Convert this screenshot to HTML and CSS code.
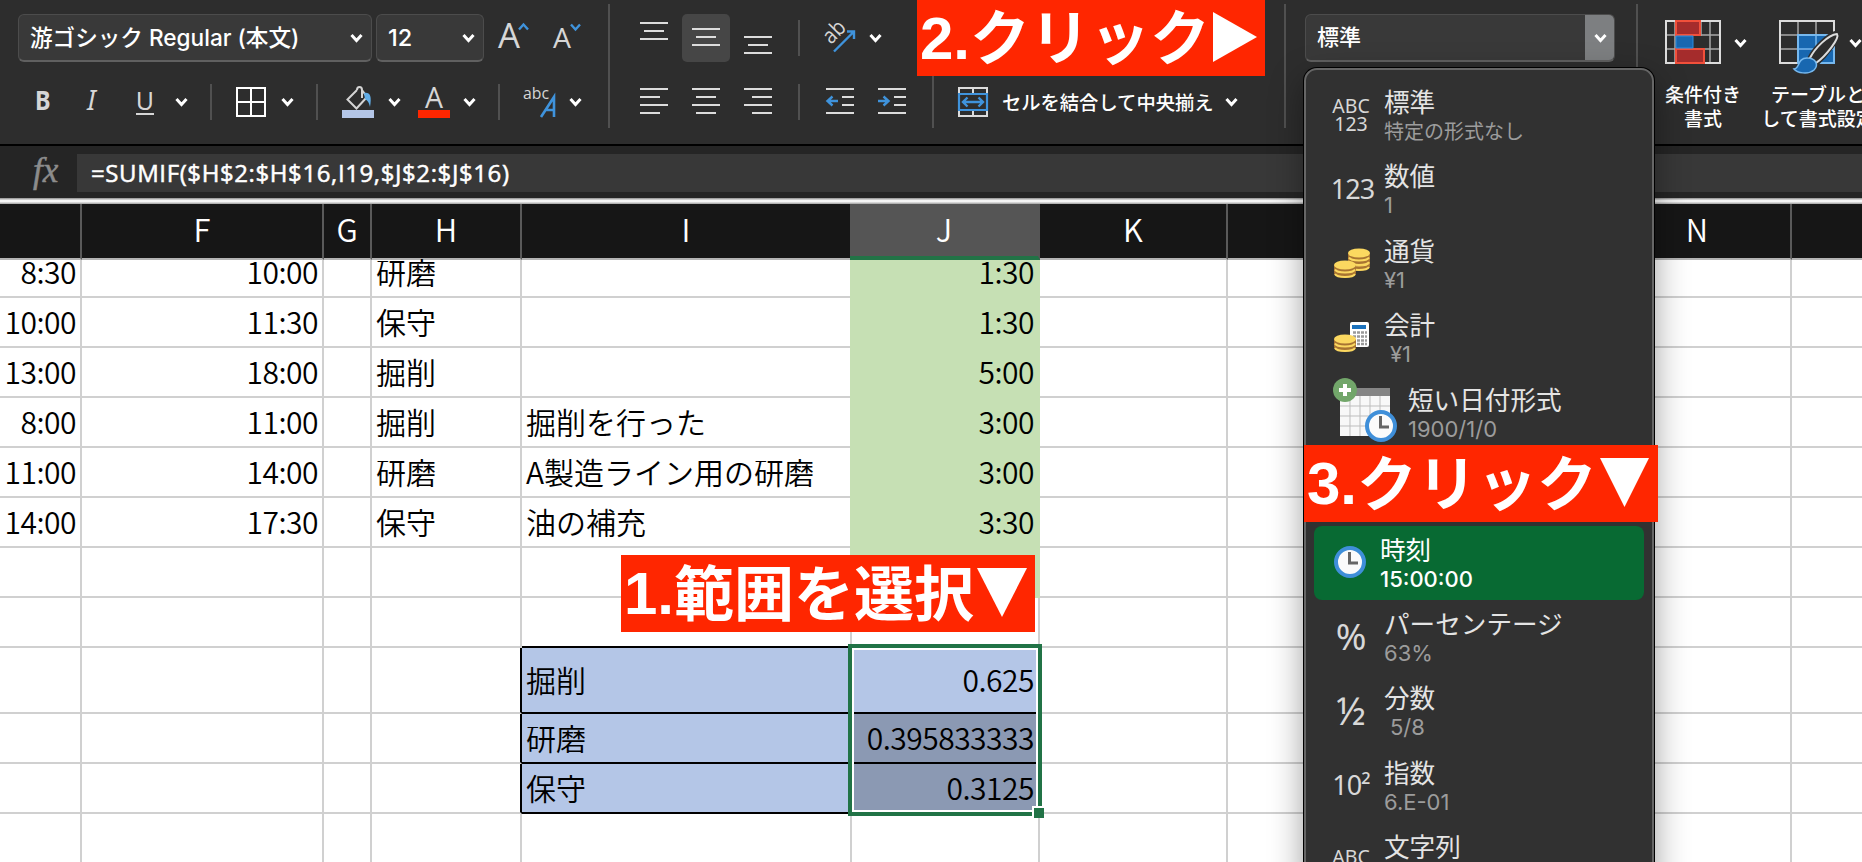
FILE: index.html
```html
<!DOCTYPE html>
<html lang="ja">
<head>
<meta charset="utf-8">
<title>SUMIF</title>
<link rel="stylesheet" href="styles.css">
</head>
<body>
<svg class="defs" width="0" height="0" aria-hidden="true">
  <symbol id="chev" viewBox="0 0 13 10"><path d="M1.500 2l5 5.500 5-5.500" fill="none" stroke="#fff" stroke-width="3"/></symbol>
  <symbol id="clock" viewBox="0 0 32 32"><circle cx="16" cy="16" r="14" fill="#fbfbfb" stroke="#3f8fd9" stroke-width="4"/><path d="M15.500 6v11h8.500" fill="none" stroke="#666" stroke-width="3"/></symbol>
  <symbol id="coins" viewBox="0 0 22 18"><path d="M0 5v8c0 6 22 6 22 0V5z" fill="#a87432"/><path d="M1 9.500c2 4 18 4 20 0M1 14c2 4 18 4 20 0" fill="none" stroke="#fbd860" stroke-width="2"/><ellipse cx="11" cy="5" rx="11" ry="4.600" fill="#fbd860"/></symbol>
</svg>
<div class="app">
  <header class="ribbon">
    <section class="group g-font">
      <div class="row r1">
        <div class="combo font-name"><span>游ゴシック Regular (本文)</span><svg class="chev"><use href="#chev"/></svg></div>
        <div class="combo font-size"><span>12</span><svg class="chev"><use href="#chev"/></svg></div>
        <svg width="32" height="30"><text x="0" y="25" font-size="35" class="ic-t" textLength="22" lengthAdjust="spacingAndGlyphs">A</text><path d="M21 6.500l4.500-5 4.500 5" class="bl"/></svg>
        <svg width="32" height="30"><text x="0" y="25" font-size="27" class="ic-t" textLength="18" lengthAdjust="spacingAndGlyphs">A</text><path d="M18 1.500l4.500 5 4.500-5" class="bl"/></svg>
      </div>
      <div class="row r2">
        <b class="fmt">B</b><i class="fmt it">I</i><span class="fmt un">U</span><svg class="chev"><use href="#chev"/></svg>
        <span class="sep"></span>
        <svg width="30" height="30"><path d="M1 1h28v28H1zM15 1v28M1 15h28" fill="none" stroke="#fff" stroke-width="2"/></svg><svg class="chev"><use href="#chev"/></svg>
        <span class="sep"></span>
        <svg width="32" height="32"><path d="M15 4L5.500 13.500l9 9L25 11M15 4c0-4 5-4 5 0v8M20 4l5 7" fill="none" stroke="#d4d4d4" stroke-width="2"/><path d="M22 7c6-1 8 3 6 14-1-5-3-7-5-8z" fill="#62aee8"/><path d="M0 24h32v8H0z" fill="#b4c6e7"/></svg><svg class="chev"><use href="#chev"/></svg>
        <svg width="32" height="32"><text x="7" y="22" font-size="30" class="ic-t" textLength="18" lengthAdjust="spacingAndGlyphs">A</text><path d="M0 24h32v8H0z" fill="#ff2600"/></svg><svg class="chev"><use href="#chev"/></svg>
        <span class="sep"></span>
        <svg width="36" height="34"><text x="0" y="14" font-size="16.500" class="ic-t" textLength="26" lengthAdjust="spacingAndGlyphs">abc</text><path d="M18 32L31 12v20M23 25h8" fill="none" stroke="#3f93dc" stroke-width="2.600"/></svg><svg class="chev"><use href="#chev"/></svg>
      </div>
    </section>
    <section class="group g-align">
      <div class="row r1">
        <svg width="28" height="32"><path d="M0 1h28M4 9h20M0 17h28" class="ln"/></svg>
        <span class="pressed"><svg width="28" height="20"><path d="M0 1h28M4 9h20M0 17h28" class="ln"/></svg></span>
        <svg width="28" height="32"><path d="M0 15h28M4 23h20M0 31h28" class="ln"/></svg>
        <span class="sep"></span>
        <svg width="34" height="34"><text x="8" y="24" font-size="22" class="ic-t" transform="rotate(-45 8 24)" textLength="23" lengthAdjust="spacingAndGlyphs">ab</text><path d="M11 30.500L31 10.500M24 10.500h7V18" class="bl"/></svg><svg class="chev"><use href="#chev"/></svg>
      </div>
      <div class="row r2">
        <svg width="28" height="28"><path d="M0 1h28M0 9h20M0 17h28M0 25h20" class="ln"/></svg>
        <svg width="28" height="28"><path d="M0 1h28M4 9h20M0 17h28M4 25h20" class="ln"/></svg>
        <svg width="28" height="28"><path d="M0 1h28M8 9h20M0 17h28M8 25h20" class="ln"/></svg>
        <span class="sep"></span>
        <svg width="28" height="28"><path d="M0 1h28M16 9h12M16 17h12M0 25h28" class="ln"/><path d="M12 13H1M6.500 8.500L1.500 13l5 4.500" class="bl"/></svg>
        <svg width="28" height="28"><path d="M0 1h28M16 9h12M16 17h12M0 25h28" class="ln"/><path d="M0 13h11M5.500 8.500l5 4.500-5 4.500" class="bl"/></svg>
      </div>
    </section>
    <section class="group g-merge">
      <div class="row r2">
        <svg width="30" height="30"><path d="M1 1h28v28H1zM15 1v6M15 23v6" class="ln" fill="none"/><path d="M1 7h28v16H1z" fill="#2d2d2d" stroke="#3f93dc" stroke-width="2.200"/><path d="M5 15h20M9.500 10.500L5 15l4.500 4.500M20.500 10.500L25 15l-4.500 4.500" class="bl"/></svg>
        <span class="merge-label">セルを結合して中央揃え</span><svg class="chev"><use href="#chev"/></svg>
      </div>
    </section>
    <section class="group g-number">
      <div class="row r1"><div class="combo number-format"><span>標準</span><span class="drop"><svg class="chev"><use href="#chev"/></svg></span></div></div>
    </section>
    <section class="group g-style">
      <div class="style-btn">
        <div class="style-icon"><svg width="56" height="48"><path d="M1 1h54v42H1zM1 15h54M1 29h54M10 1v42M36 1v42M45 1v42" fill="none" stroke="#a8a8a8" stroke-width="1.500"/><path d="M1 1h54v42H1z" fill="none" stroke="#dcdcdc" stroke-width="2"/><path d="M28 16h16v12H28z" fill="#2d2d2d"/><path d="M11 1h24v14H11zM11 29h28v14H11z" fill="#a52c2c" stroke="#f2503b" stroke-width="2"/><path d="M11 16h17v12H11z" fill="#1867b0" stroke="#2b8ee0"/></svg><svg class="chev"><use href="#chev"/></svg></div>
        <span>条件付き<br>書式</span>
      </div>
      <div class="style-btn second">
        <div class="style-icon"><svg width="60" height="56"><path d="M1 15h54M1 29h54M19 1v42M37 1v42" stroke="#a8a8a8" stroke-width="1.500"/><path d="M1 1h54v42H1z" fill="none" stroke="#dcdcdc" stroke-width="2"/><path d="M19 15h36v28H19z" fill="#1867b0" stroke="#76b8ee" stroke-width="2"/><path d="M37 15v28M19 29h36" stroke="#76b8ee" stroke-width="1.500"/><path d="M31 38C36 28 49 15 58 13c3 4-11 22-21 31z" fill="#2d2d2d" stroke="#2d2d2d" stroke-width="5"/><path d="M31 38C36 28 49 15 58 14c3 4-11 22-21 29z" fill="#2d2d2d" stroke="#dcdcdc" stroke-width="2"/><path d="M15 49c6 0 3-11 13-11 9 0 12 7 7 12-6 5-17 3-20-1z" fill="#1867b0" stroke="#76b8ee" stroke-width="1.500"/></svg><svg class="chev"><use href="#chev"/></svg></div>
        <span>テーブルと<br>して書式設定</span>
      </div>
    </section>
  </header>
  <div class="formula"><i class="fx">fx</i><div class="formula-input">=SUMIF($H$2:$H$16,I19,$J$2:$J$16)</div></div>
  <div class="band"></div>
  <main class="sheet">
    <div class="line head"><span></span><span>F</span><span>G</span><span>H</span><span>I</span><span class="cur">J</span><span>K</span><span></span><span></span><span>N</span><span></span></div>
    <div class="line first"><span class="n">8:30</span><span class="n">10:00</span><span></span><span>研磨</span><span></span><span class="n gr">1:30</span><span></span><span></span><span></span><span></span><span></span></div>
    <div class="line"><span class="n">10:00</span><span class="n">11:30</span><span></span><span>保守</span><span></span><span class="n gr">1:30</span><span></span><span></span><span></span><span></span><span></span></div>
    <div class="line"><span class="n">13:00</span><span class="n">18:00</span><span></span><span>掘削</span><span></span><span class="n gr">5:00</span><span></span><span></span><span></span><span></span><span></span></div>
    <div class="line"><span class="n">8:00</span><span class="n">11:00</span><span></span><span>掘削</span><span>掘削を行った</span><span class="n gr">3:00</span><span></span><span></span><span></span><span></span><span></span></div>
    <div class="line"><span class="n">11:00</span><span class="n">14:00</span><span></span><span>研磨</span><span>A製造ライン用の研磨</span><span class="n gr">3:00</span><span></span><span></span><span></span><span></span><span></span></div>
    <div class="line"><span class="n">14:00</span><span class="n">17:30</span><span></span><span>保守</span><span>油の補充</span><span class="n gr">3:30</span><span></span><span></span><span></span><span></span><span></span></div>
    <div class="line"><span></span><span></span><span></span><span></span><span></span><span class="gr"></span><span></span><span></span><span></span><span></span><span></span></div>
    <div class="line"><span></span><span></span><span></span><span></span><span class="bb"></span><span class="bb"></span><span></span><span></span><span></span><span></span><span></span></div>
    <div class="line tall"><span></span><span></span><span></span><span class="br"></span><span class="bu">掘削</span><span class="bu n">0.625</span><span></span><span></span><span></span><span></span><span></span></div>
    <div class="line"><span></span><span></span><span></span><span class="br"></span><span class="bu">研磨</span><span class="bu n dk">0.395833333</span><span></span><span></span><span></span><span></span><span></span></div>
    <div class="line"><span></span><span></span><span></span><span class="br"></span><span class="bu">保守</span><span class="bu n dk">0.3125</span><span></span><span></span><span></span><span></span><span></span></div>
    <div class="line"><span></span><span></span><span></span><span></span><span></span><span></span><span></span><span></span><span></span><span></span><span></span></div>
  </main>
  <div class="selection"><i class="handle"></i></div>
  <nav class="menu">
    <div class="item"><span class="mi abc">ABC<br>123</span><p><b>標準</b><small class="jp">特定の形式なし</small></p></div>
    <div class="item"><span class="mi num">123</span><p><b>数値</b><small>1</small></p></div>
    <div class="item"><span class="mi"><svg width="36" height="34"><use href="#coins" x="15" y="5" width="22" height="18"/><use href="#coins" x="15" y="0" width="22" height="18"/><use href="#coins" x="1" y="12" width="22" height="18"/></svg></span><p><b>通貨</b><small>¥1</small></p></div>
    <div class="item"><span class="mi"><svg width="36" height="34"><rect x="17" y="0" width="19" height="25" rx="2" fill="#fff"/><path d="M19 3h14v4H19z" fill="#1b72bd"/><path d="M20 10.500h14M20 14.500h14M20 18.500h14M20 22h14" stroke="#9a9a9a" stroke-width="2.500" stroke-dasharray="3 1"/><use href="#coins" x="1" y="12" width="22" height="18"/></svg></span><p><b>会計</b><small class="ind">¥1</small></p></div>
    <div class="item wide"><span class="mi"><svg width="66" height="66"><path d="M8 10h50v48H8z" fill="#f8f8f8"/><path d="M8 10h50v8H8z" fill="#858585"/><path d="M8 28h50M8 38h50M8 48h50M18 18v40M28 18v40M38 18v40M48 18v40" stroke="#bdbdbd"/><circle cx="13" cy="12" r="12" fill="#72a66a"/><path d="M13 6v12M7 12h12" stroke="#fff" stroke-width="4"/><use href="#clock" x="33" y="32" width="32" height="32"/></svg></span><p><b>短い日付形式</b><small>1900/1/0</small></p></div>
    <div class="item"></div>
    <div class="item on"><span class="mi"><svg width="32" height="32"><use href="#clock" width="32" height="32"/></svg></span><p><b>時刻</b><small>15:00:00</small></p></div>
    <div class="item low"><span class="mi pct">%</span><p><b>パーセンテージ</b><small>63%</small></p></div>
    <div class="item low"><span class="mi frac">½</span><p><b>分数</b><small class="ind">5/8</small></p></div>
    <div class="item low"><span class="mi exp">10²</span><p><b>指数</b><small>6.E-01</small></p></div>
    <div class="item low"><span class="mi abc">ABC</span><p><b>文字列</b></p></div>
  </nav>
  <div class="callout c1">1.<span>範囲を選択</span><svg width="50" height="49"><path d="M0 0h50L25 49z" fill="#fff"/></svg></div>
  <div class="callout c2">2.<span>クリック</span><svg width="44" height="50"><path d="M0 0v50l44-25z" fill="#fff"/></svg></div>
  <div class="callout c3">3.<span>クリック</span><svg width="49" height="49"><path d="M0 0h49L24.500 49z" fill="#fff"/></svg></div>
</div>
</body>
</html>
```
FILE: styles.css
```css
* { box-sizing: border-box; }
body { margin: 0; background: #fff; font-family: "Noto Sans CJK JP", "Noto Sans", sans-serif; }
.defs { display: none; }
.app { position: relative; width: 1862px; height: 862px; overflow: hidden; }
svg { display: block; flex: none; overflow: visible; }
.chev { width: 13px; height: 10px; }

/* ribbon */
.ribbon { display: flex; height: 146px; background: #2d2d2d; border-bottom: 2px solid #000; color: #fff; }
.group { position: relative; flex: none; height: 124px; margin-top: 4px; padding-top: 10px; border-right: 2px solid #505050; }
.g-font { width: 610px; }
.g-align { width: 324px; }
.g-merge { width: 352px; padding-top: 80px; }
.g-number { width: 352px; }
.g-style { width: 300px; border: 0; display: flex; }
.row { display: grid; align-items: center; justify-items: start; }
.r1 { height: 48px; margin-bottom: 22px; }
.r2 { height: 36px; }
.g-font .r1 { padding-left: 18px; grid-template-columns: 358px 122px 55px 40px; }
.g-font .r2 { padding-left: 35px; grid-template-columns: 52px 49px 39px 35px 26px 45px 35px 26px 46px 30px 45px 35px 25px 46px 20px; }
.g-align .r1 { padding-left: 30px; grid-template-columns: 42px 62px 54px 25px 46px 20px; }
.g-align .r2 { padding-left: 30px; grid-template-columns: 52px 52px 54px 28px 52px 40px; }
.g-merge .r2 { padding-left: 24px; grid-template-columns: 44px 223px 20px; }
.g-number .r1 { padding-left: 19px; }
.combo { display: flex; align-items: center; justify-content: space-between; height: 48px; padding: 0 8px 0 11px; background: #393939; border: 1px solid #4c4c4c; border-bottom: 2px solid #606060; border-radius: 6px; font: 500 22px/43px Inter, "Noto Sans CJK JP", sans-serif; white-space: nowrap; }
.combo > span { margin-top: -1px; }
.font-name { width: 354px; font-size: 22.6px; }
.font-size { width: 108px; font-size: 23.5px; }
.number-format { width: 310px; padding-right: 0; overflow: hidden; }
.combo > .drop { display: flex; align-items: center; justify-content: center; width: 30px; height: 48px; margin: 0 -1px 0 0; background: #7d7f81; }
.ic-t { fill: #d6d6d6; font-family: "Open Sans", sans-serif; font-weight: 400; }
.ln { stroke: #dcdcdc; stroke-width: 2; }
.bl { fill: none; stroke: #3f93dc; stroke-width: 2.4; }
.sep { width: 2px; height: 36px; background: #505050; }
.fmt { height: 36px; color: #d6d6d6; font-family: "Noto Sans", sans-serif; font-size: 27px; line-height: 32px; }
b.fmt { font-size: 26px; transform: scaleX(.9); transform-origin: 0 0; }
.un { width: 18px; height: 28px; line-height: 27px; border-bottom: 2px solid #d6d6d6; display: flex; justify-content: center; font-size: 25px; margin-top: -2px; }
.pressed { display: flex; align-items: center; justify-content: center; width: 48px; height: 48px; background: #464646; border-radius: 5px; }
.merge-label { font-size: 19.3px; font-weight: 500; line-height: 36px; white-space: nowrap; }
.style-btn { flex: none; width: 107px; margin-left: 27px; padding-top: 6px; font-size: 19px; font-weight: 500; line-height: 24px; white-space: nowrap; }
.style-icon { display: flex; gap: 13px; height: 62px; }
.style-icon .chev { margin-top: 18px; }
.style-btn > span { display: block; width: 76px; text-align: center; }
.second { margin-left: 7px; }
.second .style-icon { gap: 10px; }
.second > span { margin-left: -18px; width: 114px; }

/* formula bar */
.formula { display: flex; height: 52px; padding-top: 8px; background: #252525; }
.fx { width: 77px; padding-left: 33px; color: #8c8c8c; font: italic 500 35px/34px "Liberation Serif", serif; -webkit-text-stroke: .5px #8c8c8c; }
.formula-input { flex: 1; height: 38px; padding-left: 14px; background: #383838; color: #fff; font: 500 24px/37px "Open Sans", sans-serif; letter-spacing: .6px; -webkit-text-stroke: .5px #fff; }
.band { height: 6px; background: linear-gradient(#8c8c8c, #f4f4f4 40%, #f4f4f4 60%, #a0a0a0); }

/* sheet */
.line { display: grid; grid-template-columns: 82px 242px 48px 150px 330px 188px 188px 188px 188px 188px 70px; grid-template-rows: 100%; height: 50px; }
.line > span { display: flex; align-items: center; padding: 0 4px 2px; border-right: 2px solid #d0d0d0; border-bottom: 2px solid #d0d0d0; font-size: 30px; font-weight: 350; line-height: 46px; white-space: nowrap; color: #000; }
.line > span:last-child { border-right: 0; }
.line > .n { justify-content: flex-end; letter-spacing: -.5px; }
.head { height: 56px; background: #161616; }
.line.head > span { justify-content: center; padding: 0 0 4px; border-right-color: #5a5a5a; border-bottom-color: #b4b4b4; color: #fff; font-size: 31px; }
.line.head > .cur { margin-left: -2px; background: #555; border-right-color: #555; border-bottom: 4px solid #217346; padding-bottom: 2px; }
.line.first { height: 38px; }
.line.first > span { align-items: flex-end; }
.line > .gr { margin-left: -2px; background: #c6e0b4; border-color: #c6e0b4; }
.line > .bb { border-bottom-color: #000; }
.line > .br { border-right-color: #000; }
.line > .bu { background: #b4c6e7; border-color: #000; }
.line > .dk { background: #8b99b3; }
.tall { height: 66px; }
.selection { position: absolute; left: 848px; top: 644px; width: 194px; height: 172px; border: 4px solid #217346; box-shadow: inset 0 0 0 2px #fff; }
.handle { position: absolute; right: -6px; bottom: -6px; width: 12px; height: 12px; background: #217346; border: 2px solid #fff; border-right: 0; border-bottom: 0; }

/* number format menu */
.menu { position: absolute; left: 1304px; top: 68px; width: 350px; height: 820px; padding-top: 12px; background: #313131; border: 2px solid #666; border-radius: 13px; box-shadow: 0 0 0 1px #000, 0 12px 34px rgba(0,0,0,.4); color: #e4e4e4; }
.item { display: flex; height: 74.3px; }
.mi { display: flex; flex: none; align-items: center; justify-content: center; width: 60px; margin: 5px 3px 0 15px; height: 58px; color: #d8d8d8; font-family: "Noto Sans", sans-serif; }
.item p { display: flex; flex-direction: column; margin: 2px 0 0; }
.item b { height: 33px; font-size: 25.6px; font-weight: 400; line-height: 33px; white-space: nowrap; }
.item small { height: 28px; color: #9c9c9c; font: 400 22px/28px Inter, sans-serif; white-space: nowrap; }
.item small.jp { font: 400 20px/28px "Noto Sans CJK JP", sans-serif; }
.item .ind { padding-left: 6px; }
.mi.abc { font-size: 19.5px; line-height: 18px; text-align: center; padding-bottom: 3px; }
.mi.num { font-size: 27px; letter-spacing: -1px; padding: 0 0 4px 3px; }
.mi.pct { font-size: 37px; padding-bottom: 2px; }
.mi.frac { font-size: 38px; }
.mi.exp { font-size: 27px; letter-spacing: -1px; }
.wide .mi { width: 66px; margin: 3px 10px 0 26px; }
.wide p { margin-top: 3px; }
.low p { margin-top: 4px; }
.on { margin: -2px 8px 2px; background: #086a33; border-radius: 8px; color: #fff; }
.on .mi { margin: 7px 3px 0 6px; }
.on p { margin: 6px 0 0 -3px; }
.on small { color: #fff; font-weight: 500; }

/* step callouts */
.callout { position: absolute; display: flex; align-items: center; height: 77px; padding-left: 3px; background: #ff2600; color: #fff; font: 700 60px/75px "Liberation Sans", sans-serif; white-space: nowrap; }
.callout span { font-family: "Noto Sans CJK JP", sans-serif; line-height: 70px; margin-top: -8px; }
.callout svg { margin: -3px 0 0 3px; }
.c1 { left: 621px; top: 555px; width: 414px; }
.c2 { left: 917px; top: 0; width: 348px; height: 76px; }
.c3 { left: 1304px; top: 445px; width: 354px; }
```
